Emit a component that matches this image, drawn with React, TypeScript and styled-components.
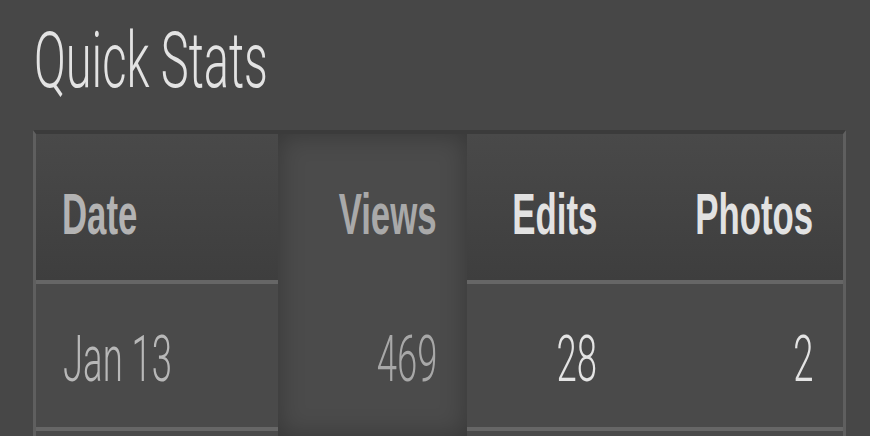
import React from 'react';
import styled, { createGlobalStyle, css } from 'styled-components';

const GlobalStyle = createGlobalStyle`
  html, body {
    margin: 0;
    padding: 0;
    background-color: #474747;
    font-family: "Liberation Sans", Arial, sans-serif;
  }
`;

type Align = 'left' | 'right';

const thinFont = `Roboto, "Liberation Sans", Arial, sans-serif`;

const Page = styled.main`
  display: flex;
  flex-direction: column;
  align-items: flex-start;
  padding: 23px 0 0 33px;
  height: 413px;
  overflow: hidden;
`;

const Title = styled.h1`
  margin: 0 0 30px 1px;
  font-family: ${thinFont};
  font-size: 77px;
  line-height: 1;
  font-weight: 300;
  color: #e3e3e3;
  white-space: nowrap;
  display: inline-block;
  transform: scaleX(0.61);
  transform-origin: left center;
`;

const Table = styled.div`
  display: flex;
  flex: 1;
  width: 807px;
  border-top: 4px solid #3b3b3b;
  border-left: 3px solid #5f5f5f;
  border-right: 3px solid #5f5f5f;
`;

const Column = styled.div<{ $width: number; $highlight?: boolean }>`
  display: flex;
  flex-direction: column;
  width: ${(p) => p.$width}px;
  flex-shrink: 0;
  background-color: #4a4a4a;
  ${(p) =>
    p.$highlight &&
    css`
      background-color: #4b4b4b;
      box-shadow: inset 0 0 26px rgba(0, 0, 0, 0.28);
      position: relative;
      z-index: 1;
    `}
`;

const HeaderCell = styled.div<{ $align: Align; $highlight?: boolean }>`
  display: flex;
  justify-content: ${(p) => (p.$align === 'left' ? 'flex-start' : 'flex-end')};
  height: 150px;
  padding: 52px 30px 0 26px;
  box-sizing: border-box;
  ${(p) =>
    !p.$highlight &&
    css`
      background: linear-gradient(#494949, #3e3e3e);
      border-bottom: 4px solid #666666;
    `}
`;

const BodyCell = styled.div<{ $align: Align; $highlight?: boolean }>`
  display: flex;
  justify-content: ${(p) => (p.$align === 'left' ? 'flex-start' : 'flex-end')};
  height: 147px;
  padding: 44px 30px 0 27px;
  box-sizing: border-box;
  ${(p) =>
    !p.$highlight &&
    css`
      border-bottom: 4px solid #666666;
    `}
`;

const Label = styled.span<{ $align: Align; $color: string; $bold?: boolean; $size: number; $scale: number }>`
  display: inline-block;
  white-space: nowrap;
  font-family: ${(p) => (p.$bold ? `"Liberation Sans", Arial, sans-serif` : thinFont)};
  font-size: ${(p) => p.$size}px;
  line-height: 1;
  font-weight: ${(p) => (p.$bold ? 700 : 300)};
  color: ${(p) => p.$color};
  transform: scaleX(${(p) => p.$scale});
  transform-origin: ${(p) => p.$align} center;
`;

type Col = {
  key: 'date' | 'views' | 'edits' | 'photos';
  title: string;
  width: number;
  align: Align;
  headColor: string;
  cellColor: string;
  highlight?: boolean;
};

const columns: Col[] = [
  { key: 'date', title: 'Date', width: 242, align: 'left', headColor: '#b3b3b3', cellColor: '#b8b8b8' },
  { key: 'views', title: 'Views', width: 189, align: 'right', headColor: '#a9a9a9', cellColor: '#a8a8a8', highlight: true },
  { key: 'edits', title: 'Edits', width: 160, align: 'right', headColor: '#e2e2e2', cellColor: '#e4e4e4' },
  { key: 'photos', title: 'Photos', width: 216, align: 'right', headColor: '#e2e2e2', cellColor: '#e4e4e4' },
];

const rows = [{ date: 'Jan 13', views: '469', edits: '28', photos: '2' }];

const App = () => {
  return (
    <>
      <GlobalStyle />
      <Page>
        <Title>Quick Stats</Title>
        <Table>
          {columns.map((col) => (
            <Column key={col.key} $width={col.width} $highlight={col.highlight}>
              <HeaderCell $align={col.align} $highlight={col.highlight}>
                <Label $align={col.align} $color={col.headColor} $bold $size={57} $scale={0.61}>
                  {col.title}
                </Label>
              </HeaderCell>
              {rows.map((row, i) => (
                <BodyCell key={i} $align={col.align} $highlight={col.highlight}>
                  <Label $align={col.align} $color={col.cellColor} $size={64} $scale={0.57}>
                    {row[col.key]}
                  </Label>
                </BodyCell>
              ))}
            </Column>
          ))}
        </Table>
      </Page>
    </>
  );
};

export default App;
